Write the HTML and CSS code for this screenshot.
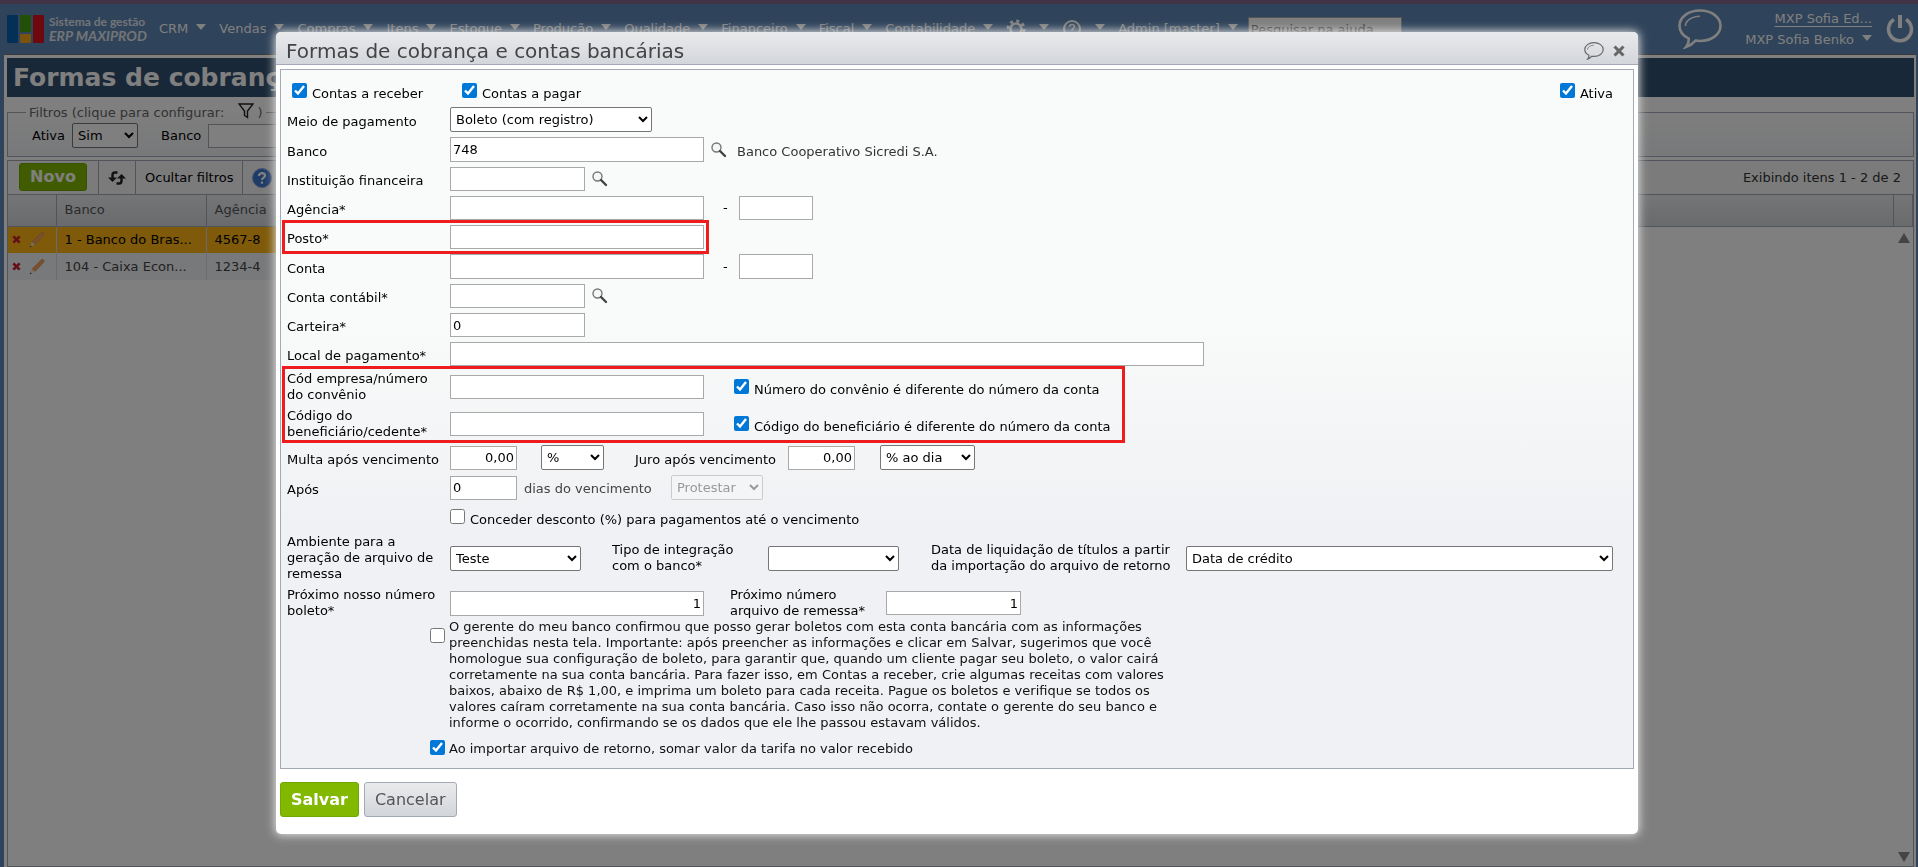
FILE: index.html
```html
<!DOCTYPE html>
<html lang="pt-br">
<head>
  <meta charset="UTF-8">
  <title>Formas de cobrança e contas bancárias</title>
  <link rel="stylesheet" href="styles.css">
</head>
<body>
  <!-- Símbolos reutilizados -->
  <svg class="symbols" width="0" height="0">
    <symbol id="lupa" viewBox="0 0 16 16">
      <circle cx="5.500" cy="5.500" r="4.500" fill="#f4f6f8" stroke="#777" stroke-width="1.400"/>
      <path d="M9 9l5 5" stroke="#444" stroke-width="2.400" stroke-linecap="round"/>
    </symbol>
    <symbol id="balao" viewBox="0 0 44 40">
      <path d="M22 1.500c11.500 0 20.500 6.500 20.500 15.200S33.500 32 22 32c-1.500 0-3-.1-4.500-.4-2.500 3-5.500 5-9.500 6.400 2-2.500 3-5 2.800-8.400C5 26.800 1.500 22 1.500 16.700 1.500 8 10.500 1.500 22 1.500z" fill="none" stroke="currentColor" stroke-width="2.600"/>
      <path d="M7.500 17c0-5 5.500-9.500 14.500-9.800" fill="none" stroke="currentColor" stroke-width="1.600"/>
    </symbol>
    <symbol id="excluir" viewBox="0 0 10 10">
      <path d="M1.500 1.500l7 7M8.500 1.500l-7 7" stroke="#c8202c" stroke-width="3"/>
    </symbol>
    <symbol id="editar" viewBox="0 0 18 18">
      <path d="M4 11L13 2q2-1.500 3 .5 .5 1-.5 2L7 13.500z" fill="#f0a060" stroke="#c9803c" stroke-width=".5"/>
      <path d="M4 11l3 2.500-5.500 3z" fill="#f3dcb8"/>
      <path d="M2.500 14.500l1.500 1-2.500 1z" fill="#555"/>
    </symbol>
  </svg>

  <header class="topbar">
    <a href="#" class="logo">
      <svg width="37" height="28" viewBox="0 0 37 28">
        <rect x="0" y="0" width="11" height="28" rx="1" fill="#0860ae"/>
        <rect x="13" y="0" width="11" height="17" rx="1" fill="#45a012"/>
        <rect x="13" y="19" width="11" height="9" rx="1" fill="#f5a81c"/>
        <rect x="26" y="0" width="11" height="28" rx="1" fill="#d8101c"/>
      </svg>
      <span class="logo-text">Sistema de gestão<em>ERP MAXIPROD</em></span>
    </a>
    <nav class="menu">
      <a href="#">CRM</a>
      <a href="#">Vendas</a>
      <a href="#">Compras</a>
      <a href="#">Itens</a>
      <a href="#">Estoque</a>
      <a href="#">Produção</a>
      <a href="#">Qualidade</a>
      <a href="#">Financeiro</a>
      <a href="#">Fiscal</a>
      <a href="#">Contabilidade</a>
      <a href="#" aria-label="Configurações">
        <svg width="20" height="20" viewBox="0 0 20 20"><circle cx="10" cy="10" r="5.500" fill="none" stroke="#fff" stroke-width="2.500"/><circle cx="10" cy="10" r="8" fill="none" stroke="#fff" stroke-width="3" stroke-dasharray="3 3.280"/></svg>
      </a>
      <a href="#" aria-label="Ajuda">
        <svg width="20" height="20" viewBox="0 0 20 20"><circle cx="10" cy="10" r="8" fill="none" stroke="#fff" stroke-width="2"/><path d="M7.500 8c0-3.500 5-3.200 5-.3 0 1.800-2.500 1.800-2.500 3.800M10 13v1.600" fill="none" stroke="#fff" stroke-width="1.600"/></svg>
      </a>
      <a href="#">Admin [master]</a>
    </nav>
    <input type="text" class="help-search" placeholder="Pesquisar na ajuda..." aria-label="Pesquisar na ajuda">
    <div class="user">
      <svg width="44" height="40"><use href="#balao"/></svg>
      <div class="user-names">
        <a href="#" class="company">MXP Sofia Ed...</a>
        <a href="#" class="person">MXP Sofia Benko</a>
      </div>
      <button class="power" aria-label="Sair">
        <svg width="28" height="30" viewBox="0 0 28 30"><path d="M8 5.500a11.500 11.500 0 1 0 12 0" fill="none" stroke="#fff" stroke-width="3.600"/><path d="M14 1v13" stroke="#fff" stroke-width="4"/></svg>
      </button>
    </div>
  </header>

  <main class="page">
    <h1>Formas de cobrança e contas bancárias</h1>

    <fieldset class="filters">
      <legend>Filtros (clique para configurar:
        <svg width="16" height="16" viewBox="0 0 16 16"><path d="M1 1h14L9.500 8v6.500l-3-2V8z" fill="none" stroke="#222" stroke-width="1.400"/></svg>)</legend>
      <label for="f-ativa">Ativa</label>
      <select id="f-ativa"><option>Sim</option></select>
      <label for="f-banco" class="f-banco">Banco</label>
      <input type="text" id="f-banco">
    </fieldset>

    <section class="grid">
      <div class="toolbar">
        <button class="btn-green">Novo</button>
        <button class="tool" aria-label="Atualizar">
          <svg width="18" height="14" viewBox="0 0 18 14"><path d="M9.500 1.500H7q-2.500 0-2.500 2.500v5" fill="none" stroke="#222" stroke-width="2.400"/><path d="M0 6.500h9L4.500 11z" fill="#222"/><path d="M8.500 12.500H11q2.500 0 2.500-2.500V6" fill="none" stroke="#222" stroke-width="2.400"/><path d="M9 7.500h9L13.500 3z" fill="#222"/></svg>
        </button>
        <button class="tool">Ocultar filtros</button>
        <button class="tool" aria-label="Ajuda">
          <svg width="20" height="20" viewBox="0 0 20 20"><circle cx="10" cy="10" r="9.500" fill="#3f78d0" stroke="#8ba6d8"/><path d="M7 8c0-4 6-3.600 6-.3 0 2-3 2-3 4.300M10 13.500v2.200" fill="none" stroke="#fff" stroke-width="2.200"/></svg>
        </button>
        <span class="count">Exibindo itens 1 - 2 de 2</span>
      </div>
      <table>
        <thead>
          <tr><th class="col-actions"></th><th class="col-bank">Banco</th><th class="col-agency">Agência</th><th></th><th class="col-scroll"></th></tr>
        </thead>
        <tbody>
          <tr class="selected">
            <td class="actions"><svg width="9" height="9"><use href="#excluir"/></svg><svg width="18" height="18"><use href="#editar"/></svg></td>
            <td>1 - Banco do Bras...</td><td>4567-8</td>
          </tr>
          <tr>
            <td class="actions"><svg width="9" height="9"><use href="#excluir"/></svg><svg width="18" height="18"><use href="#editar"/></svg></td>
            <td>104 - Caixa Econ...</td><td>1234-4</td>
          </tr>
        </tbody>
      </table>
      <div class="scrollbar">
        <span class="scroll-up"></span>
        <span class="scroll-down"></span>
      </div>
    </section>
  </main>

  <div class="overlay">
    <form class="modal" role="dialog" aria-labelledby="modal-title">
      <div class="modal-header">
        <h2 id="modal-title">Formas de cobrança e contas bancárias</h2>
        <button type="button" class="icon-btn" aria-label="Comentários"><svg width="20" height="18"><use href="#balao"/></svg></button>
        <button type="button" class="icon-btn" aria-label="Fechar"><svg width="12" height="12" viewBox="0 0 12 12"><path d="M1.500 1.500l9 9M10.500 1.500l-9 9" stroke="currentColor" stroke-width="3"/></svg></button>
      </div>

      <div class="panel">
        <div class="row checks">
          <label class="check w-receber"><input type="checkbox" checked>Contas a receber</label>
          <label class="check"><input type="checkbox" checked>Contas a pagar</label>
          <label class="check ativa"><input type="checkbox" checked>Ativa</label>
        </div>
        <div class="row">
          <label class="name" for="meio">Meio de pagamento</label>
          <select id="meio" class="w-meio"><option>Boleto (com registro)</option></select>
        </div>
        <div class="row">
          <label class="name" for="banco">Banco</label>
          <input type="text" id="banco" class="w-big tall" value="748">
          <button type="button" class="search" aria-label="Pesquisar banco"><svg width="16" height="16"><use href="#lupa"/></svg></button>
          <span class="info">Banco Cooperativo Sicredi S.A.</span>
        </div>
        <div class="row">
          <label class="name" for="inst">Instituição financeira</label>
          <input type="text" id="inst" class="w-mid">
          <button type="button" class="search" aria-label="Pesquisar instituição"><svg width="16" height="16"><use href="#lupa"/></svg></button>
        </div>
        <div class="row">
          <label class="name" for="agencia">Agência*</label>
          <input type="text" id="agencia" class="w-big">
          <span class="dash">-</span>
          <input type="text" class="w-digit" aria-label="Dígito da agência">
        </div>
        <div class="highlight posto">
          <div class="row">
            <label class="name" for="posto">Posto*</label>
            <input type="text" id="posto" class="w-big">
          </div>
        </div>
        <div class="row">
          <label class="name" for="conta">Conta</label>
          <input type="text" id="conta" class="w-big tall">
          <span class="dash">-</span>
          <input type="text" class="w-digit tall" aria-label="Dígito da conta">
        </div>
        <div class="row">
          <label class="name" for="contabil">Conta contábil*</label>
          <input type="text" id="contabil" class="w-mid">
          <button type="button" class="search" aria-label="Pesquisar conta contábil"><svg width="16" height="16"><use href="#lupa"/></svg></button>
        </div>
        <div class="row">
          <label class="name" for="carteira">Carteira*</label>
          <input type="text" id="carteira" class="w-mid" value="0">
        </div>
        <div class="row">
          <label class="name" for="local">Local de pagamento*</label>
          <input type="text" id="local" class="w-local">
        </div>
        <div class="highlight convenio">
          <div class="row">
            <label class="name two" for="empresa">Cód empresa/número<br>do convênio</label>
            <input type="text" id="empresa" class="w-big">
            <label class="check gap"><input type="checkbox" checked>Número do convênio é diferente do número da conta</label>
          </div>
          <div class="row">
            <label class="name two" for="benef">Código do<br>beneficiário/cedente*</label>
            <input type="text" id="benef" class="w-big">
            <label class="check gap"><input type="checkbox" checked>Código do beneficiário é diferente do número da conta</label>
          </div>
        </div>
        <div class="row">
          <label class="name" for="multa">Multa após vencimento</label>
          <input type="text" id="multa" class="w-small num" value="0,00">
          <select class="w-pct" aria-label="Unidade da multa"><option>%</option></select>
          <label class="name juro" for="juro">Juro após vencimento</label>
          <input type="text" id="juro" class="w-small num" value="0,00">
          <select class="w-dia" aria-label="Unidade do juro"><option>% ao dia</option></select>
        </div>
        <div class="row">
          <label class="name" for="apos">Após</label>
          <input type="text" id="apos" class="w-small" value="0">
          <span class="dias">dias do vencimento</span>
          <select class="w-protestar" aria-label="Ação após o vencimento" disabled><option>Protestar</option></select>
        </div>
        <div class="row desconto">
          <label class="check"><input type="checkbox">Conceder desconto (%) para pagamentos até o vencimento</label>
        </div>
        <div class="row ambiente">
          <label class="name two" for="ambiente">Ambiente para a geração de arquivo de remessa</label>
          <select id="ambiente" class="w-ambiente"><option>Teste</option></select>
          <label class="name two tipo" for="tipo">Tipo de integração<br>com o banco*</label>
          <select id="tipo" class="w-ambiente"><option></option></select>
          <label class="name two data" for="data">Data de liquidação de títulos a partir<br>da importação do arquivo de retorno</label>
          <select id="data" class="w-data"><option>Data de crédito</option></select>
        </div>
        <div class="row numeros">
          <label class="name two" for="nosso">Próximo nosso número boleto*</label>
          <input type="text" id="nosso" class="w-big tall num" value="1">
          <label class="name two remessa" for="remessa">Próximo número<br>arquivo de remessa*</label>
          <input type="text" id="remessa" class="w-mid num" value="1">
        </div>
        <label class="long">
          <input type="checkbox">
          <span>O gerente do meu banco confirmou que posso gerar boletos com esta conta bancária com as informações preenchidas nesta tela. Importante: após preencher as informações e clicar em Salvar, sugerimos que você homologue sua configuração de boleto, para garantir que, quando um cliente pagar seu boleto, o valor cairá corretamente na sua conta bancária. Para fazer isso, em Contas a receber, crie algumas receitas com valores baixos, abaixo de R$ 1,00, e imprima um boleto para cada receita. Pague os boletos e verifique se todos os valores caíram corretamente na sua conta bancária. Caso isso não ocorra, contate o gerente do seu banco e informe o ocorrido, confirmando se os dados que ele lhe passou estavam válidos.</span>
        </label>
        <label class="long tarifa">
          <input type="checkbox" checked>
          <span>Ao importar arquivo de retorno, somar valor da tarifa no valor recebido</span>
        </label>
      </div>

      <div class="modal-footer">
        <button type="button" class="btn-green salvar">Salvar</button>
        <button type="button" class="btn-grey">Cancelar</button>
      </div>
    </form>
  </div>
</body>
</html>
```
FILE: styles.css
```css
* {
  box-sizing: border-box;
}

body {
  margin: 0;
  height: 100vh;
  display: flex;
  flex-direction: column;
  overflow: hidden;
  background: #5e86b4;
  border-top: 4px solid #83698f;
  font-family: 'DejaVu Sans', sans-serif;
  font-size: 13px;
  line-height: 16px;
  color: #000;
}

input, select, button {
  font: inherit;
  margin: 0;
}

button {
  cursor: pointer;
}

a {
  color: inherit;
  text-decoration: none;
}

.symbols {
  position: absolute;
}

input[type="text"] {
  height: 24px;
  padding: 0 2px;
  border: 1px solid #a9a9a9;
  background: white;
  color: #000;
}

input[type="text"].tall {
  height: 25px;
}

input[type="checkbox"] {
  width: 15px;
  height: 15px;
  flex: none;
  accent-color: #0078d7;
}

select {
  height: 25px;
  padding: 0 1px;
  border: 1px solid #767676;
  border-radius: 2px;
  background-color: white;
  color: #000;
}

/* Topo */
.topbar {
  height: 50px;
  flex: none;
  display: flex;
  align-items: center;
  padding: 0 4px 0 7px;
  color: white;
}

.logo {
  display: flex;
  gap: 5px;
  width: 152px;
}

.logo-text {
  font: bold 12px/14px Lato, sans-serif;
  color: #e4e8ee;
}

.logo-text em {
  display: block;
  font-size: 14px;
}

.menu {
  display: flex;
  align-items: center;
  gap: 13px;
}

.menu a, .person {
  display: flex;
  align-items: center;
  gap: 8px;
  white-space: nowrap;
}

.menu a::after, .person::after {
  content: "";
  border: 5px solid transparent;
  border-top: 6px solid white;
  border-bottom: 0;
  margin-bottom: 4px;
}

.menu svg {
  margin-right: 5px;
}

.topbar .help-search {
  width: 154px;
  margin-left: 10px;
}

.help-search::placeholder {
  color: #757575;
}

.user {
  margin-left: auto;
  display: flex;
  align-items: center;
}

.user-names {
  width: 150px;
  display: flex;
  flex-direction: column;
  align-items: flex-end;
  gap: 5px;
}

.company {
  text-decoration: underline;
  text-underline-offset: 3px;
}

.power {
  margin-left: 14px;
  padding: 0;
  border: 0;
  background: none;
  height: 30px;
}

/* Página */
.page {
  flex: 1;
  display: flex;
  flex-direction: column;
  margin: 0 2px 0 4px;
  padding: 3px 2px 0 3px;
  border-top: 1px solid #777;
  background: white;
}

h1 {
  margin: 0;
  padding: 0 6px;
  font-size: 25px;
  line-height: 39px;
  background: #335070;
  color: white;
}

.filters {
  display: flex;
  align-items: center;
  margin: 6px 0 0;
  padding: 2px 24px 8px;
  min-width: 0;
  border: 1px solid #a3aab6;
  background: linear-gradient(#fcfcfc, #f0f2f5);
}

.filters legend {
  margin-left: -6px;
  padding: 0 3px;
  color: #666;
}

.filters legend svg {
  margin: 0 3px 0 10px;
  vertical-align: -2px;
}

.filters select {
  width: 66px;
  margin-left: 7px;
}

.f-banco {
  margin: 0 7px 0 23px;
}

.grid {
  position: relative;
  flex: 1;
  margin-top: 3px;
  border: 1px solid #a3aab6;
}

.toolbar {
  display: flex;
  align-items: stretch;
  height: 34px;
  padding-right: 12px;
  border-bottom: 1px solid #a3aab6;
  background: #f6f7f8;
}

.btn-green {
  border: 1px solid #6fa800;
  border-radius: 3px;
  background: #82b900;
  color: white;
  font-size: 16px;
  font-weight: bold;
}

.toolbar .btn-green {
  width: 68px;
  margin: 2px 11px 3px;
  padding: 0;
}

.tool {
  display: flex;
  align-items: center;
  padding: 0 9px;
  border: 0;
  border-left: 1px solid #a3aab6;
  background: none;
}

.count {
  margin: auto 0 auto auto;
  color: #333;
}

table {
  width: 100%;
  table-layout: fixed;
  border-collapse: collapse;
}

th, td {
  height: 27px;
  padding: 0 8px;
  text-align: left;
  border-right: 1px solid #d4d7dc;
}

th {
  height: 31px;
  font-weight: normal;
  color: #555;
  background: linear-gradient(#eaebee, #d2d5d9);
  border-right-color: #a3aab6;
  border-bottom: 1px solid #a3aab6;
}

td {
  color: #444;
  background: #f0f2f4;
}

.selected td {
  color: #000;
  background: #fcb514;
}

.col-actions {
  width: 48px;
}

.col-bank {
  width: 150px;
}

.col-agency {
  width: 134px;
}

.col-scroll {
  width: 19px;
}

.actions {
  padding: 0 4px;
}

.actions svg {
  margin-right: 7px;
  vertical-align: middle;
}

.actions svg + svg {
  margin: 0;
}

.scrollbar {
  position: absolute;
  top: 66px;
  right: 0;
  bottom: 0;
  width: 18px;
  padding: 6px 3px 4px;
  display: flex;
  flex-direction: column;
  justify-content: space-between;
  background: white;
}

.scroll-up, .scroll-down {
  border: 6px solid transparent;
}

.scroll-up {
  border-top: 0;
  border-bottom: 10px solid #888;
}

.scroll-down {
  border-bottom: 0;
  border-top: 10px solid #888;
}

/* Janela */
.overlay {
  position: fixed;
  inset: 0;
  padding: 32px 4px 0 0;
  background: rgba(0, 0, 0, 0.5);
}

.modal {
  width: 71%;
  min-width: 1362px;
  margin: 0 auto;
  border-radius: 5px;
  background: white;
  box-shadow: 0 0 10px 1px #e4e4e4;
}

.modal-header {
  display: flex;
  align-items: center;
  gap: 9px;
  height: 33px;
  padding: 5px 13px 0 10px;
  border-bottom: 1px solid #a3aab6;
  border-radius: 5px 5px 0 0;
  background: linear-gradient(#e9eaec, #d3d6db);
}

h2 {
  margin: 0 auto 0 0;
  font-size: 20px;
  line-height: 26px;
  font-weight: normal;
  color: #444;
}

.icon-btn {
  display: flex;
  padding: 0;
  border: 0;
  background: none;
  color: #666;
}

.panel {
  margin: 4px 4px 0;
  padding: 5px 20px 5px 6px;
  border: 1px solid #a3aab6;
  background: linear-gradient(#f9fbfb 0, #f9fbfa 35%, #f0f1f4 65%);
}

.row {
  display: flex;
  align-items: center;
  padding: 2px 0 3px;
}

.name {
  width: 163px;
  flex: none;
  padding: 4px 5px 0 0;
}

.name.two {
  padding-top: 0;
}

.check {
  display: flex;
  gap: 5px;
  padding-top: 3px;
}

.check input {
  margin: -3px 0 3px;
}

.checks {
  padding: 8px 0 3px 5px;
}

.w-receber {
  width: 170px;
}

.ativa {
  margin-left: auto;
}

.w-meio { width: 202px; }
.w-big { width: 254px; }
.w-mid { width: 135px; }
.w-digit { width: 74px; }
.w-small { width: 67px; }
.w-pct { width: 63px; margin-left: 24px; }
.w-dia { width: 95px; margin-left: 25px; }
.w-protestar { width: 92px; margin-left: 17px; }
.w-ambiente { width: 131px; }
.w-data { flex: 1; }
.w-local { width: 754px; }

.search {
  display: flex;
  margin-left: 7px;
  padding: 0;
  border: 0;
  background: none;
}

.info {
  padding: 4px 0 0 10px;
  color: #333;
}

.dash {
  width: 35px;
  padding-left: 19px;
}

.gap {
  margin-left: 30px;
  padding-top: 6px;
}

.num {
  text-align: right;
}

.juro {
  width: 153px;
  margin-left: 31px;
}

.dias {
  width: 137px;
  padding: 2px 0 0 7px;
  color: #444;
  white-space: nowrap;
}

select:disabled {
  border-color: #ccc;
  background-color: #f4f5f6;
  color: #999;
  opacity: 1;
}

.desconto {
  padding: 6px 0 6px 163px;
}

.ambiente {
  padding: 0 0 5px;
}

.tipo {
  width: 156px;
  margin-left: 31px;
}

.data {
  width: 255px;
  margin-left: 32px;
}

.numeros {
  padding: 0;
}

.remessa {
  width: 156px;
  margin-left: 26px;
}

.long {
  display: flex;
  gap: 4px;
  padding-left: 143px;
}

.long span {
  width: 744px;
  color: #111;
}

.long input {
  margin-top: 9px;
}

.tarifa {
  padding-bottom: 6px;
}

.tarifa span {
  padding-top: 10px;
}

/* Destaque dos campos obrigatórios */
.highlight {
  position: relative;
}

.highlight::after {
  content: "";
  position: absolute;
  inset: -3px auto 0 -5px;
  border: 3px solid #ee1c1c;
  pointer-events: none;
}

.posto::after {
  bottom: -2px;
  width: 428px;
}

.convenio::after {
  width: 844px;
}

.posto {
  width: 417px;
}

.convenio {
  width: 833px;
}

.posto::after, .convenio::after {
  right: -5px;
  width: auto;
}

.modal-footer {
  display: flex;
  gap: 5px;
  padding: 13px 4px 17px;
}

.modal-footer button {
  height: 35px;
  padding: 0 10px;
}

.btn-grey {
  border: 1px solid #a3aab6;
  border-radius: 3px;
  background: linear-gradient(#eaebed, #d2d5d9);
  color: #555;
  font-size: 16px;
}
```
